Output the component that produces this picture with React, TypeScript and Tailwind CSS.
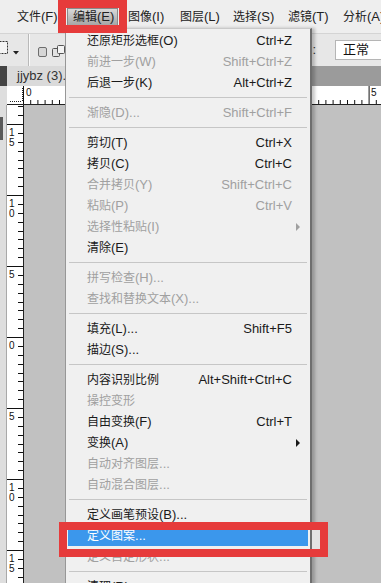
import React from "react";

type Entry = {
  label?: string;
  keys?: string;
  off?: boolean;
  sub?: boolean;
  on?: boolean;
  sep?: boolean;
};

const items: Entry[] = [
  { label: "还原矩形选框(O)", keys: "Ctrl+Z" },
  { label: "前进一步(W)", keys: "Shift+Ctrl+Z", off: true },
  { label: "后退一步(K)", keys: "Alt+Ctrl+Z" },
  { sep: true },
  { label: "渐隐(D)...", keys: "Shift+Ctrl+F", off: true },
  { sep: true },
  { label: "剪切(T)", keys: "Ctrl+X" },
  { label: "拷贝(C)", keys: "Ctrl+C" },
  { label: "合并拷贝(Y)", keys: "Shift+Ctrl+C", off: true },
  { label: "粘贴(P)", keys: "Ctrl+V", off: true },
  { label: "选择性粘贴(I)", sub: true, off: true },
  { label: "清除(E)" },
  { sep: true },
  { label: "拼写检查(H)...", off: true },
  { label: "查找和替换文本(X)...", off: true },
  { sep: true },
  { label: "填充(L)...", keys: "Shift+F5" },
  { label: "描边(S)..." },
  { sep: true },
  { label: "内容识别比例", keys: "Alt+Shift+Ctrl+C" },
  { label: "操控变形", off: true },
  { label: "自由变换(F)", keys: "Ctrl+T" },
  { label: "变换(A)", sub: true },
  { label: "自动对齐图层...", off: true },
  { label: "自动混合图层...", off: true },
  { sep: true },
  { label: "定义画笔预设(B)..." },
  { label: "定义图案...", on: true },
  { label: "定义自定形状...", off: true },
  { sep: true },
  { label: "清理(R)", sub: true },
];

const CJK = /([\u3000-\u9fff]+)/;

// chinese runs a bit smaller than the latin ones, like the old windows ui font
const Mixed = ({ text }: { text: string }) => (
  <>
    {text.split(CJK).map((part, i) =>
      CJK.test(part) ? (
        <span key={i} className="text-[12px]">
          {part}
        </span>
      ) : (
        <span key={i}>{part}</span>
      )
    )}
  </>
);

const MenuRow = ({ item }: { item: Entry }) => {
  if (item.sep) {
    return (
      <div className="flex h-[9px] items-center px-[3px]">
        <div className="h-px w-full bg-[#c6c6c6]" />
      </div>
    );
  }
  const color = item.on
    ? "bg-[#3b97ec] text-white"
    : item.off
    ? "text-[#a0a0a0]"
    : "text-[#1a1a1a]";
  return (
    <div
      className={`mx-[2px] flex h-[21px] items-center pl-[19px] pr-[16px] ${color}`}
    >
      <span className="whitespace-nowrap">
        <Mixed text={item.label ?? ""} />
      </span>
      {item.keys && <span className="ml-auto whitespace-nowrap">{item.keys}</span>}
      {item.sub && (
        <svg className="ml-auto -mr-[8px]" width="4" height="8" viewBox="0 0 4 8">
          <path d="M0 0 L4 4 L0 8 Z" fill="currentColor" />
        </svg>
      )}
    </div>
  );
};

const HRuler = () => {
  const ticks = Array.from({ length: 50 }, (_, j) => j * 7.2);
  return (
    <svg width="358" height="18" className="block">
      {ticks.map((x, j) => (
        <line
          key={j}
          x1={x + 0.5}
          x2={x + 0.5}
          y1={j % 48 === 0 ? 0 : 14}
          y2={18}
          stroke="#111"
          strokeWidth="1"
        />
      ))}
      <text x="3" y="10" fontSize="10" fontFamily="Liberation Sans" fill="#111">
        0
      </text>
      <text x="348" y="10" fontSize="10" fontFamily="Liberation Sans" fill="#111">
        5
      </text>
    </svg>
  );
};

const VRuler = () => {
  const labels = [["1", "5"], ["1", "0"], ["5"], ["0"], ["5"], ["1", "0"], ["1", "5"]];
  const ticks = Array.from({ length: 56 }, (_, j) => j - 3);
  return (
    <svg width="16" height="478" className="block">
      {ticks.map((j) => {
        const y = Math.round(19 + j * 8.875) + 0.5;
        const major = ((j % 8) + 8) % 8 === 0;
        return (
          <line key={j} x1={major ? 0 : 11} x2={16} y1={y} y2={y} stroke="#111" />
        );
      })}
      {labels.map((digits, k) =>
        digits.map((d, i) => (
          <text
            key={`${k}-${i}`}
            x="2"
            y={19 + k * 71 + 12 + i * 10}
            fontSize="10"
            fontFamily="Liberation Sans"
            fill="#111"
          >
            {d}
          </text>
        ))
      )}
    </svg>
  );
};

const App = () => {
  return (
    <div className="relative flex h-[583px] w-[381px] flex-col overflow-hidden bg-[#c1c1c1] font-['Liberation_Sans','Noto_Sans_CJK_SC',sans-serif] text-[13px]">
      {/* menu bar */}
      <div className="flex h-[33px] shrink-0 items-center bg-[#eeeeee] pl-[17px] text-[#222]">
        <span className="w-[50px] shrink-0 whitespace-nowrap">
          <Mixed text="文件(F)" />
        </span>
        <span className="flex h-[18px] w-[51px] shrink-0 items-center whitespace-nowrap border border-[#8a8a8a] bg-linear-to-b from-[#d9d9d9] to-[#a6a6a6] pl-[5px]">
          <Mixed text="编辑(E)" />
        </span>
        <span className="ml-[10px] w-[52px] shrink-0 whitespace-nowrap">
          <Mixed text="图像(I)" />
        </span>
        <span className="w-[53px] shrink-0 whitespace-nowrap">
          <Mixed text="图层(L)" />
        </span>
        <span className="w-[55px] shrink-0 whitespace-nowrap">
          <Mixed text="选择(S)" />
        </span>
        <span className="w-[55px] shrink-0 whitespace-nowrap">
          <Mixed text="滤镜(T)" />
        </span>
        <span className="shrink-0 whitespace-nowrap">
          <Mixed text="分析(A)" />
        </span>
      </div>

      {/* options bar */}
      <div className="flex h-[33px] shrink-0 items-center border-t border-[#d4d4d4] bg-[#e7e7e7]">
        <svg width="10" height="16" className="mb-[4px]">
          <rect x="-3.5" y="1.5" width="11" height="12" fill="#f4f4f4" stroke="#333" strokeDasharray="2 1" />
        </svg>
        <svg width="6" height="4" className="ml-[3px] mt-[6px]">
          <path d="M0 0 H6 L3 3.5 Z" fill="#222" />
        </svg>
        <div className="ml-[9px] flex h-full">
          <div className="w-px bg-[#b9b9b9]" />
          <div className="w-px bg-[#fafafa]" />
        </div>
        <svg width="10" height="11" className="ml-[8px] mt-[4px]">
          <rect x="0.5" y="0.5" width="8" height="9" rx="1.5" fill="#d6d6d6" stroke="#6d6d6d" />
        </svg>
        <svg width="14" height="13" className="ml-[4px] mt-[2px]">
          <rect x="0.5" y="3.5" width="7" height="8" rx="1" fill="#e2e2e2" stroke="#555" />
          <rect x="5.5" y="0.5" width="7" height="8" rx="1" fill="#f3f3f3" stroke="#555" />
        </svg>
        <span className="ml-auto text-[#333]">:</span>
        <div className="ml-[19px] flex h-[20px] w-[46px] items-center border border-r-0 border-[#b5b5b5] bg-white pl-[7px] text-[13px] text-[#111]">
          正常
        </div>
      </div>

      {/* document tab */}
      <div className="flex h-[20px] shrink-0 bg-[#9b9b9b]">
        <div className="w-[7px] bg-[#444]" />
        <div className="flex w-[59px] items-center bg-[#dadada] pl-[10px] text-[#333] whitespace-nowrap">
          jjybz (3).j
        </div>
      </div>

      {/* horizontal ruler */}
      <div className="flex h-[19px] shrink-0">
        <div className="w-[7px] bg-[#dedede]" />
        <div className="flex flex-1 border-b border-[#222] bg-white">
          <svg width="16" height="18" className="block">
            <line x1="3" x2="15" y1="15.5" y2="15.5" stroke="#222" strokeDasharray="1 1" />
            <line x1="15.5" x2="15.5" y1="2" y2="15" stroke="#222" strokeDasharray="1 1" />
          </svg>
          <HRuler />
        </div>
      </div>

      {/* canvas */}
      <div className="flex flex-1">
        <div className="flex w-[7px] flex-col border-r border-[#a9a9a9] bg-[#dedede] pt-[12px]">
          <div className="h-[23px] w-[3px] bg-[#5a5a5a]" />
        </div>
        <div className="w-[17px] border-r border-[#222] bg-white">
          <VRuler />
        </div>
        <div className="flex-1 bg-[#c1c1c1]" />
      </div>

      {/* edit menu dropdown */}
      <div className="absolute left-[65px] top-[28px] w-[247px] border-l border-t border-l-[#979797] border-t-[#c9c9c9] border-r-2 border-r-[#6f6f6f] bg-[#f0f0f0] pt-[1px] shadow-[3px_0_3px_rgba(0,0,0,0.22)]">
        {items.map((item, i) => (
          <MenuRow key={i} item={item} />
        ))}
      </div>

      {/* red annotation boxes */}
      <div className="absolute left-[58px] top-0 h-[33px] w-[69px] border-[8px] border-[#e63b3b]" />
      <div className="absolute left-[59px] top-[522px] flex h-[35px] w-[269px] justify-end border-[8px] border-[#e63b3b]">
        <div className="w-[8px] bg-[#e3e3e3]" />
      </div>
    </div>
  );
};

export default App;
